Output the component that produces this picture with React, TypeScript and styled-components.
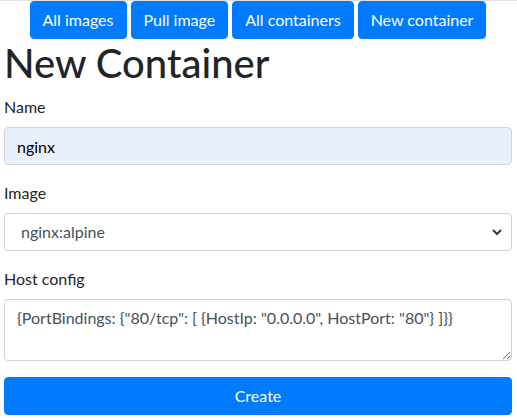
import React from 'react';
import styled, { createGlobalStyle } from 'styled-components';

const GlobalStyle = createGlobalStyle`
    html, body {
        margin: 0;
        padding: 0;
        background: #fff;
    }
    body {
        font-family: Lato, "Noto Sans", sans-serif;
        font-size: 16px;
        line-height: 1.5;
        color: #212529;
        border-top: 1px solid #dee2e6;
    }
    * {
        box-sizing: border-box;
    }
`

const Page = styled.div`
    padding: 0 5px 0 4px;
`

const Nav = styled.nav`
    display: flex;
    justify-content: center;
    gap: 4px;
`

const Button = styled.button<{ $block?: boolean }>`
    display: block;
    width: ${p => (p.$block ? '100%' : 'auto')};
    font-family: inherit;
    font-size: 16px;
    line-height: 24px;
    padding: 6px 12px;
    color: #fff;
    background: #007bff;
    border: 1px solid #007bff;
    border-radius: 4px;
    cursor: pointer;
`

const Title = styled.h1`
    margin: 0 0 8px;
    font-size: 40px;
    font-weight: 500;
    line-height: 48px;
`

const Group = styled.div`
    margin-bottom: 16px;
`

const Label = styled.label`
    display: block;
    margin-bottom: 8px;
    line-height: 24px;
`

const fieldCss = `
    display: block;
    width: 100%;
    font-family: inherit;
    font-size: 16px;
    line-height: 24px;
    color: #495057;
    background: #fff;
    border: 1px solid #ced4da;
    border-radius: 4px;
    outline: none;
`

const Input = styled.input<{ $autofilled?: boolean }>`
    ${fieldCss}
    height: 38px;
    padding: 6px 12px;
    color: ${p => (p.$autofilled ? '#000' : '#495057')};
    background: ${p => (p.$autofilled ? '#e8f0fe' : '#fff')};
`

const SelectWrap = styled.div`
    position: relative;
`

const Select = styled.select`
    ${fieldCss}
    height: 38px;
    padding: 6px 32px 6px 16px;
    appearance: none;
`

const Chevron = styled.svg`
    position: absolute;
    right: 10px;
    top: 15px;
    width: 10px;
    height: 8px;
    pointer-events: none;
`

const TextArea = styled.textarea`
    ${fieldCss}
    height: 62px;
    padding: 6px 12px;
    resize: vertical;
`

export default function App() {
    return (
        <>
            <GlobalStyle />
            <Page>
                <Nav>
                    <Button>All images</Button>
                    <Button>Pull image</Button>
                    <Button>All containers</Button>
                    <Button>New container</Button>
                </Nav>
                <Title>New Container</Title>
                <Group>
                    <Label htmlFor="name">Name</Label>
                    <Input id="name" $autofilled defaultValue="nginx" />
                </Group>
                <Group>
                    <Label htmlFor="image">Image</Label>
                    <SelectWrap>
                        <Select id="image" defaultValue="nginx:alpine">
                            <option>nginx:alpine</option>
                            <option>nginx:latest</option>
                        </Select>
                        <Chevron viewBox="0 0 10 8">
                            <path d="M1 2 L5 6 L9 2" fill="none" stroke="#343a40" strokeWidth="2" />
                        </Chevron>
                    </SelectWrap>
                </Group>
                <Group>
                    <Label htmlFor="host">Host config</Label>
                    <TextArea
                        id="host"
                        rows={2}
                        defaultValue={'{PortBindings: {"80/tcp": [ {HostIp: "0.0.0.0", HostPort: "80"} ]}}'}
                    />
                </Group>
                <Button $block>Create</Button>
            </Page>
        </>
    );
}
